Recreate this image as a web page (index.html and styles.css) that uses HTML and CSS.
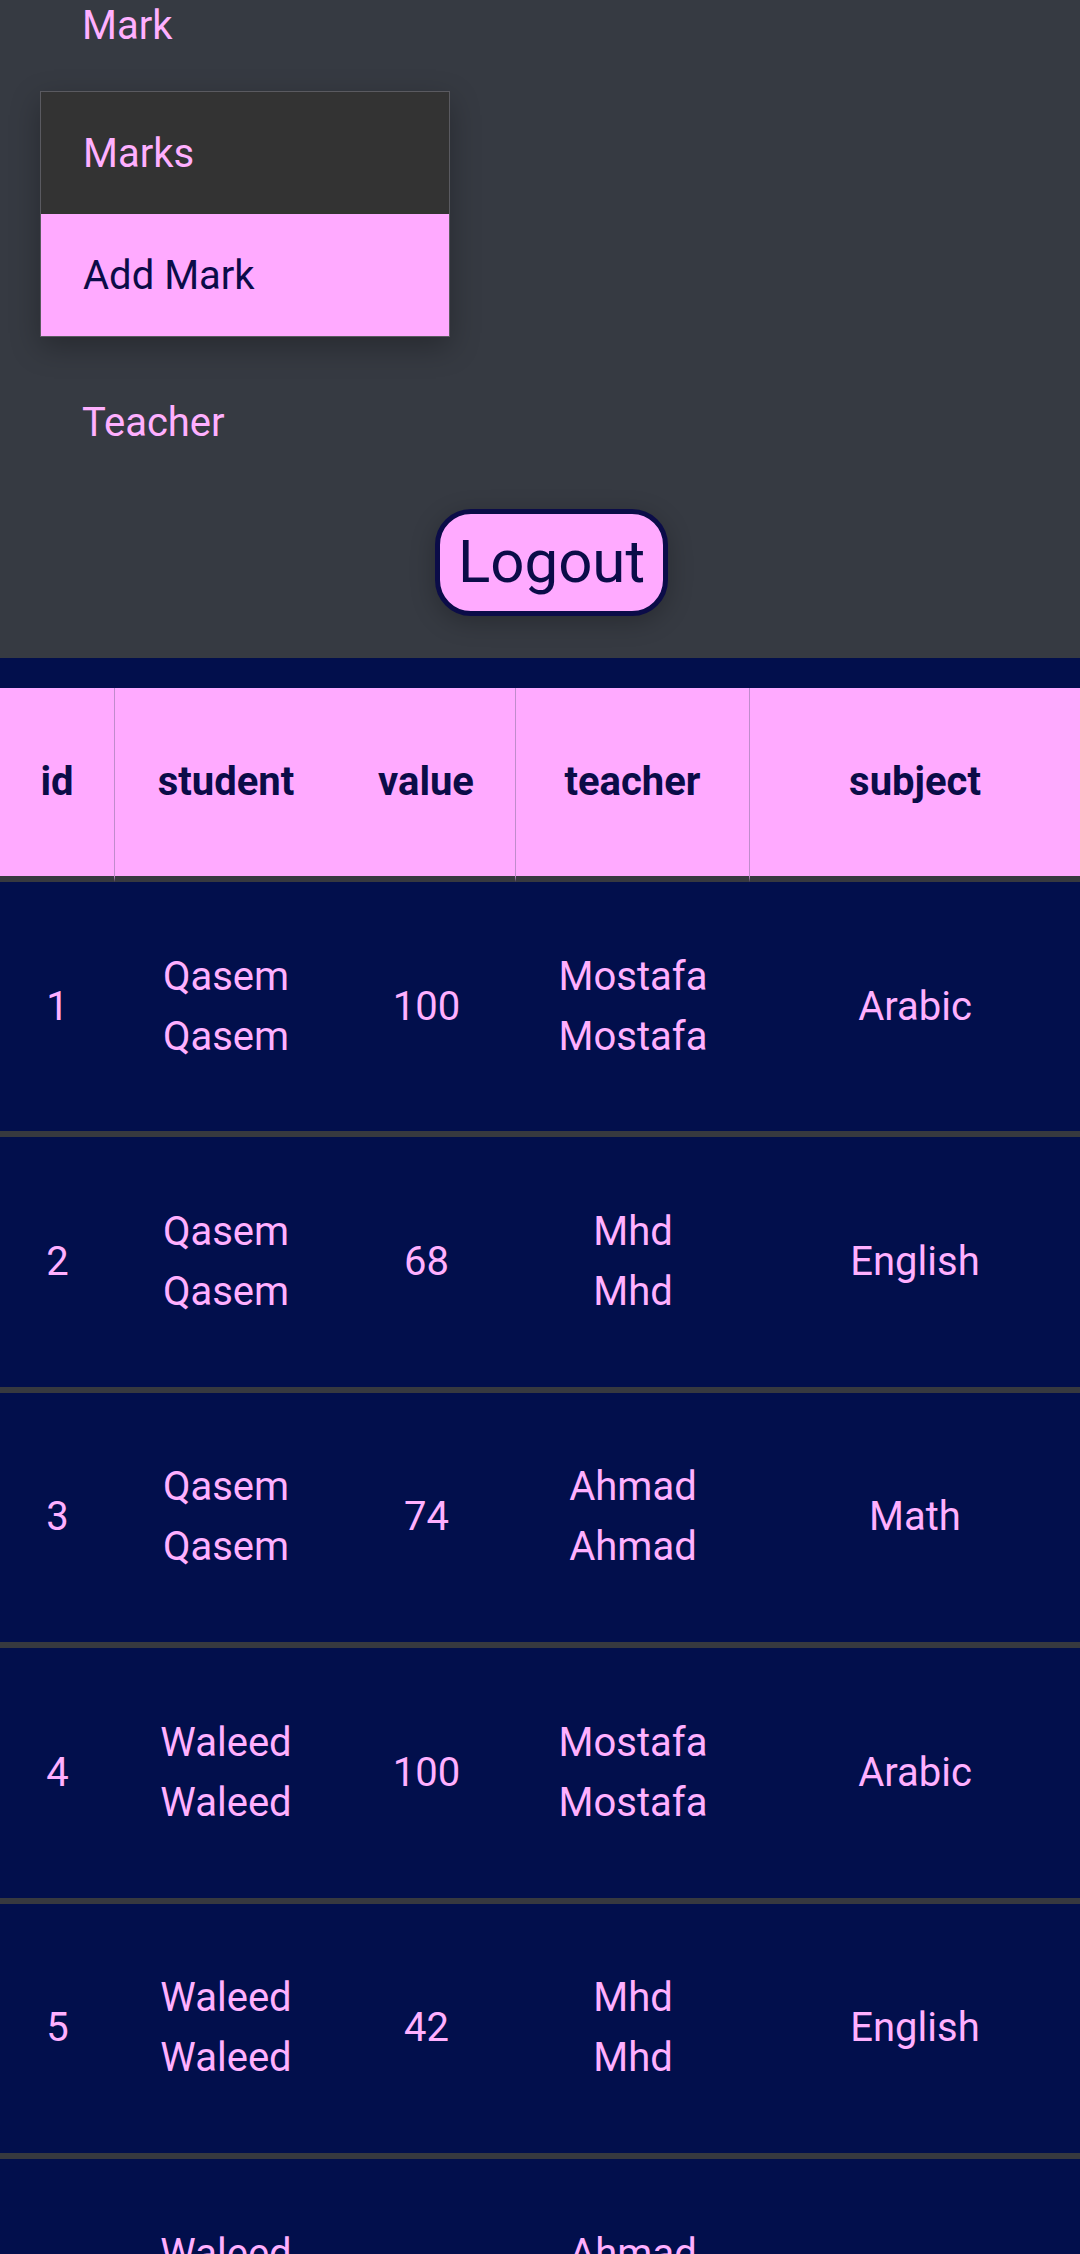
FILE: index.html
```html
<!DOCTYPE html>
<html>
<head>
<meta charset="utf-8">
<link rel="stylesheet" href="styles.css">
</head>
<body>
<nav class="nav">
  <a class="nav-link first">Mark</a>
  <div class="menu">
    <div class="menu-item">Marks</div>
    <div class="menu-item active">Add Mark</div>
  </div>
  <a class="nav-link teacher">Teacher</a>
  <div class="logout-row">
    <button class="logout">Logout</button>
  </div>
</nav>
<main class="content">
  <table class="marks">
    <colgroup>
      <col class="c-id"><col class="c-student"><col class="c-value"><col class="c-teacher"><col class="c-subject">
    </colgroup>
    <thead>
      <tr>
        <th class="sep">id</th>
        <th>student</th>
        <th class="sep">value</th>
        <th class="sep">teacher</th>
        <th>subject</th>
      </tr>
    </thead>
    <tbody>
      <tr><td>1</td><td>Qasem<br>Qasem</td><td>100</td><td>Mostafa<br>Mostafa</td><td>Arabic</td></tr>
      <tr><td>2</td><td>Qasem<br>Qasem</td><td>68</td><td>Mhd<br>Mhd</td><td>English</td></tr>
      <tr><td>3</td><td>Qasem<br>Qasem</td><td>74</td><td>Ahmad<br>Ahmad</td><td>Math</td></tr>
      <tr><td>4</td><td>Waleed<br>Waleed</td><td>100</td><td>Mostafa<br>Mostafa</td><td>Arabic</td></tr>
      <tr><td>5</td><td>Waleed<br>Waleed</td><td>42</td><td>Mhd<br>Mhd</td><td>English</td></tr>
      <tr><td>6</td><td>Waleed<br>Waleed</td><td>80</td><td>Ahmad<br>Ahmad</td><td>Math</td></tr>
    </tbody>
  </table>
</main>
</body>
</html>
```

FILE: styles.css
```css
html, body {
  margin: 0;
  padding: 0;
}
body {
  background: #020f4c;
  font-family: Roboto, "Noto Sans", sans-serif;
  font-size: 40px;
  color: #ffb0ff;
}
.nav {
  background: #363a42;
  padding: 0 0 42px 0;
}
.nav-link {
  display: block;
  color: #ffb0ff;
  padding-left: 82px;
  line-height: 47px;
}
.nav-link.first {
  line-height: 52px;
}
.menu {
  margin: 39px 0 0 40px;
  width: 408px;
  border: 1px solid #5a5a60;
  box-shadow: 0 10px 28px rgba(0, 0, 0, 0.28);
  background: #333333;
}
.menu-item {
  height: 122px;
  display: flex;
  align-items: center;
  padding-left: 42px;
  line-height: 47px;
  color: #ffb0ff;
}
.menu-item.active {
  background: #ffaaff;
  color: #0b0c48;
}
.nav-link.teacher {
  margin-top: 62px;
}
.logout-row {
  display: flex;
  justify-content: center;
  padding-left: 23px;
  margin-top: 63px;
}
.logout {
  font-family: Roboto, sans-serif;
  font-size: 60px;
  line-height: 70px;
  color: #0b0c48;
  background: #ffaaff;
  border: 5px solid #0b0c48;
  border-radius: 36px;
  padding: 13px 18px 14px;
  box-shadow: 0 6px 24px rgba(0, 0, 0, 0.25);
}
.content {
  padding-top: 30px;
}
.marks {
  width: 1080px;
  table-layout: fixed;
  border-collapse: separate;
  border-spacing: 0;
}
.c-id { width: 115px; }
.c-student { width: 222px; }
.c-value { width: 179px; }
.c-teacher { width: 234px; }
.c-subject { width: 330px; }
.marks th {
  background: #ffaaff;
  color: #0b0c48;
  font-weight: 700;
  line-height: 60px;
  padding: 64px 0;
  text-align: center;
  border-bottom: 6px solid #37393f;
}
.marks th.sep {
  border-right: 1px solid #c08ccc;
}
.marks td {
  text-align: center;
  vertical-align: middle;
  line-height: 60px;
  padding: 64.7px 0;
  color: #ffb0ff;
  border-bottom: 6px solid #37393f;
}
```
